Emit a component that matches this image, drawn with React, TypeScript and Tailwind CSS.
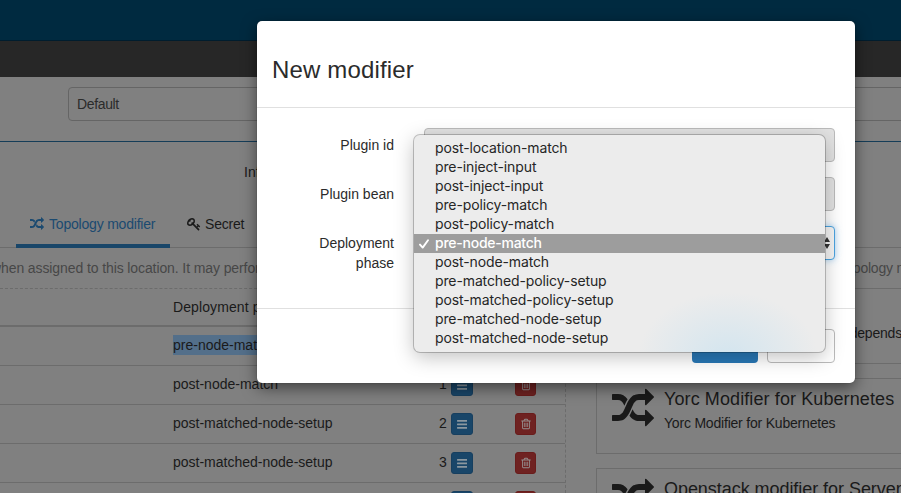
import React from "react";

const RANDOM =
  "M666 481q-60 92-137 273-22-45-37-72.5t-40.5-63.5-51-56.5-63-35-81.5-14.5h-224q-14 0-23-9t-9-23v-192q0-14 9-23t23-9h224q250 0 410 225zm1126 799q0 14-9 23l-320 320q-9 9-23 9-13 0-22.5-9.5t-9.5-22.5v-192q-32 0-85 .5t-81 1-73-1-71-5-64-10.5-63-18.5-58-28.5-59-40-55-53.5-56-69.5q59-93 136-273 22 45 37 72.5t40.5 63.5 51 56.5 63 35 81.5 14.5h256v-192q0-14 9-23t23-9q12 0 24 10l319 319q9 9 9 23zm0-896q0 14-9 23l-320 320q-9 9-23 9-13 0-22.5-9.5t-9.5-22.5v-192h-256q-48 0-87 15t-69 45-51 61.5-45 77.5q-32 62-78 171-29 66-49.5 111t-54 105-64 100-74 83-90 68.5-106.5 42-128 16.5h-224q-14 0-23-9t-9-23v-192q0-14 9-23t23-9h224q48 0 87-15t69-45 51-61.5 45-77.5q32-62 78-171 29-66 49.5-111t54-105 64-100 74-83 90-68.5 106.5-42 128-16.5h256v-192q0-14 9-23t23-9q12 0 24 10l319 319q9 9 9 23z";
const KEY =
  "M832 512q0-80-56-136t-136-56-136 56-56 136q0 42 19 83-41-19-83-19-80 0-136 56t-56 136 56 136 136 56 136-56 56-136q0-42-19-83 41 19 83 19 80 0 136-56t56-136zm851 704q0 17-49 66t-66 49q-9 0-28.5-16t-36.5-33-38.5-40-24.5-26l-96 96 220 220q28 28 28 68 0 42-39 81t-81 39q-40 0-68-28l-671-671q-176 131-365 131-163 0-265.5-102.5t-102.5-265.5q0-160 95-313t248-248 313-95q163 0 265.5 102.5t102.5 265.5q0 189-131 365l355 355 96-96q-3-3-26-24.5t-40-38.5-33-36.5-16-28.5q0-17 49-66t66-49q13 0 23 10 6 6 46 44.5t82 79.5 86.5 86 73 78 28.5 41z";
const TRASH =
  "M704 736v576q0 14-9 23t-23 9h-64q-14 0-23-9t-9-23v-576q0-14 9-23t23-9h64q14 0 23 9t9 23zm256 0v576q0 14-9 23t-23 9h-64q-14 0-23-9t-9-23v-576q0-14 9-23t23-9h64q14 0 23 9t9 23zm256 0v576q0 14-9 23t-23 9h-64q-14 0-23-9t-9-23v-576q0-14 9-23t23-9h64q14 0 23 9t9 23zm128 724v-948h-896v948q0 22 7 40.5t14.5 27 10.5 8.5h832q3 0 10.5-8.5t14.5-27 7-40.5zm-672-1076h448l-48-117q-7-9-17-11h-317q-10 2-17 11zm928 32v64q0 14-9 23t-23 9h-96v948q0 83-47 143.5t-113 60.5h-832q-66 0-113-58.5t-47-141.5v-952h-96q-14 0-23-9t-9-23v-64q0-14 9-23t23-9h309l70-167q15-37 54-63t79-26h320q40 0 79 26t54 63l70 167h309q14 0 23 9t9 23z";

function Icon({ d, className }: { d: string; className: string }) {
  return (
    <svg viewBox="0 0 1792 1792" fill="currentColor" className={className}>
      <path d={d} />
    </svg>
  );
}

const rows = [
  { phase: "pre-node-match", order: "", selected: true },
  { phase: "post-node-match", order: "1" },
  { phase: "post-matched-node-setup", order: "2" },
  { phase: "post-matched-node-setup", order: "3" },
  { phase: "", order: "" },
];

const phases = [
  "post-location-match",
  "pre-inject-input",
  "post-inject-input",
  "pre-policy-match",
  "post-policy-match",
  "pre-node-match",
  "post-node-match",
  "pre-matched-policy-setup",
  "post-matched-policy-setup",
  "pre-matched-node-setup",
  "post-matched-node-setup",
];

function ModifierRow({ phase, order, selected }: { phase: string; order: string; selected?: boolean }) {
  return (
    <div className="flex h-[39px] shrink-0 items-center border-b border-[#6c6c6c] pl-[173px]">
      <div className="w-[266px] pb-[2px]">
        <span className={selected ? "bg-[#536f8a] py-[2px]" : ""}>{phase}</span>
      </div>
      <span className="w-3 pb-[2px]">{order}</span>
      <span className="flex h-[22px] w-[22px] shrink-0 items-center justify-center rounded-[3px] border border-[#173f5f] bg-[#194669]">
        <svg viewBox="0 0 10.4 9" className="h-[9px] w-[10.4px]" fill="#8b979f">
          <rect y="0" width="10.4" height="1.7" rx=".4" />
          <rect y="3.5" width="10.4" height="1.7" rx=".4" />
          <rect y="7" width="10.4" height="1.7" rx=".4" />
        </svg>
      </span>
      <span className="ml-[42px] flex h-[22px] w-[21px] shrink-0 items-center justify-center rounded-[3px] border border-[#691c1b] bg-[#6f2221] text-[#959090]">
        <Icon d={TRASH} className="h-3 w-3" />
      </span>
    </div>
  );
}

function ModifierCard({ title, text }: { title: string; text: string }) {
  return (
    <div className="flex h-[76px] w-[330px] shrink-0 border border-[#6c6c6c] pl-[15px] pt-2">
      <Icon d={RANDOM} className="mt-[1px] h-[42px] w-[42px] shrink-0" />
      <div className="ml-[10px] whitespace-nowrap">
        <div className={text ? "text-[18px] leading-6 tracking-[0.1px]" : "text-[18px] leading-6 tracking-[-0.05px]"}>
          {title}
        </div>
        <div className="text-[14px] leading-6 tracking-[-0.2px]">{text}</div>
      </div>
    </div>
  );
}

function Backdrop() {
  return (
    <div className="flex h-full w-full flex-col bg-[#808080] text-[14px] text-[#1a1a1a]">
      <div className="h-[41px] shrink-0 border-b border-[#001d2e] bg-[#002a40]" />
      <div className="h-9 shrink-0 bg-[#272727]" />
      <div className="h-[65px] shrink-0 border-b border-[#153d58] pl-[68px] pt-[10px]">
        <div className="flex h-[34px] w-[900px] items-center rounded border border-[#656565] pl-2 tracking-[-0.35px] text-[#2b2b2b]">
          Default
        </div>
      </div>
      <div className="h-[60px] shrink-0 pl-[244px] pt-5 leading-5">Infrastructure</div>
      <div className="flex h-[46px] shrink-0 items-start border-b border-[#6c6c6c] pl-4 tracking-[-0.2px]">
        <div className="flex h-[46px] w-[154px] shrink-0 items-start border-b-4 border-[#194669] pl-[14px] pt-3 text-[#1b4a70]">
          <Icon d={RANDOM} className="mr-[5px] mt-[3px] h-[14px] w-[14px]" />
          <span className="leading-5">Topology modifier</span>
        </div>
        <div className="flex items-start pl-[17px] pt-3">
          <Icon d={KEY} className="mr-[4px] mt-[3px] h-[14px] w-[14px]" />
          <span className="leading-5">Secret</span>
        </div>
      </div>
      <div className="flex h-10 shrink-0 items-center justify-between whitespace-nowrap text-[#474747]">
        <span className="-ml-[9px] tracking-[-0.1px]">when assigned to this location. It may perform</span>
        <span className="-mr-[7px] tracking-[-0.2px]">topology m</span>
      </div>
      <div className="flex min-h-0 flex-1">
        <div className="flex w-[566px] shrink-0 flex-col border-r border-t border-dashed border-[#6c6c6c]">
          <div className="h-[38px] shrink-0 border-b-2 border-solid border-[#6c6c6c] pl-[173px] pt-2 leading-5 tracking-[0.1px]">
            Deployment phase
          </div>
          <div className="flex min-h-0 flex-1 flex-col overflow-hidden border-solid">
            {rows.map((r, i) => (
              <ModifierRow key={i} {...r} />
            ))}
          </div>
        </div>
        <div className="flex flex-col gap-[14px] pl-[30px]">
          <div className="flex h-[76px] w-[330px] shrink-0 items-end justify-end border border-[#6c6c6c] pb-[19px] pr-[23px] tracking-[-0.2px]">
            depends
          </div>
          <ModifierCard title="Yorc Modifier for Kubernetes" text="Yorc Modifier for Kubernetes" />
          <ModifierCard title="Openstack modifier for Server" text="" />
        </div>
      </div>
    </div>
  );
}

function Field({ label, children }: { label: string; children: React.ReactNode }) {
  return (
    <div className="flex h-[49px] items-start">
      <div className="w-[137px] shrink-0 pl-10 pt-[7px] text-right leading-5">{label}</div>
      <div className="ml-[30px] w-[411px]">{children}</div>
    </div>
  );
}

function Modal() {
  return (
    <div className="absolute left-[257px] top-[21px] flex h-[362px] w-[598px] flex-col rounded-[5px] bg-white text-[14px] text-[#2b2b2b] shadow-[0_5px_15px_rgba(0,0,0,0.5),0_0_1px_rgba(0,0,0,0.5)]">
      <div className="h-[87px] shrink-0 border-b border-[#e0e0e0] pl-[15px] pt-[35px] text-[24px] leading-7 tracking-[0.15px]">
        New modifier
      </div>
      <div className="h-[200px] shrink-0 pt-5">
        <Field label="Plugin id">
          <div className="h-[34px] rounded border border-[#bbb] bg-[#e2e2e2]" />
        </Field>
        <Field label="Plugin bean">
          <div className="h-[34px] rounded border border-[#bbb] bg-[#e2e2e2]" />
        </Field>
        <Field label="Deployment phase">
          <div className="flex h-[34px] items-center justify-end rounded border border-[#4aa3e0] bg-[#f5f5f5] pr-[4px] shadow-[0_0_7px_rgba(102,175,233,0.6)]">
            <svg viewBox="0 0 6 12" className="h-3 w-[6px]" fill="#333">
              <path d="M3 0l3 5H0zM3 12l3-5H0z" />
            </svg>
          </div>
        </Field>
      </div>
      <div className="flex flex-1 items-start justify-end gap-[9px] border-t border-[#e0e0e0] pr-5 pt-5">
        <div className="h-[34px] w-[66px] rounded bg-[#2877b5]" />
        <div className="h-[34px] w-[68px] rounded border border-[#bbb] bg-white" />
      </div>
    </div>
  );
}

function PhaseMenu() {
  return (
    <div className="absolute left-[414px] top-[135px] h-[217px] w-[411px] rounded-[6px] bg-[#ececec] bg-[radial-gradient(ellipse_90px_65px_at_314px_222px,#d3e5ef,transparent)] py-1 font-['Inter','Liberation_Sans',sans-serif] text-[14px] tracking-[-0.12px] text-[#262626] shadow-[0_0_0_1px_rgba(0,0,0,0.22),0_5px_20px_rgba(0,0,0,0.25)]">
      {phases.map((p) => {
        const active = p === "pre-node-match";
        return (
          <div
            key={p}
            className={
              active
                ? "flex h-[19px] items-center bg-[#9d9d9d] font-medium tracking-[-0.25px] text-white"
                : "flex h-[19px] items-center"
            }
          >
            <span className="flex w-[21px] items-center pl-[5px]">
              {active && (
                <svg viewBox="0 0 10 10" className="h-[10px] w-[10px]" fill="none" stroke="white" strokeWidth="1.9" strokeLinecap="round" strokeLinejoin="round">
                  <path d="M1 5.6L3.7 8.6L9 1.2" />
                </svg>
              )}
            </span>
            <span className="pb-[2px]">{p}</span>
          </div>
        );
      })}
    </div>
  );
}

export default function App() {
  return (
    <div className="relative h-[493px] w-[901px] overflow-hidden font-['Liberation_Sans',Arial,sans-serif]">
      <Backdrop />
      <Modal />
      <PhaseMenu />
    </div>
  );
}
